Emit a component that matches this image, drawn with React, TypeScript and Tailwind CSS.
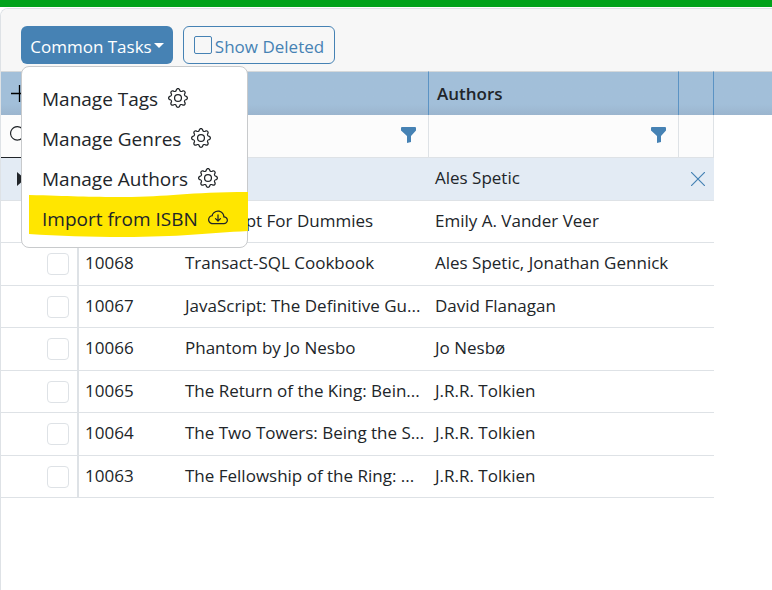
import { BsCloudArrowDown, BsGear, BsSearch } from "react-icons/bs";

type Book = { id: number; title: string; authors: string };

const books: Book[] = [
  { id: 10070, title: "SQL", authors: "Ales Spetic" },
  { id: 10069, title: "JavaScript For Dummies", authors: "Emily A. Vander Veer" },
  { id: 10068, title: "Transact-SQL Cookbook", authors: "Ales Spetic, Jonathan Gennick" },
  { id: 10067, title: "JavaScript: The Definitive Gu...", authors: "David Flanagan" },
  { id: 10066, title: "Phantom by Jo Nesbo", authors: "Jo Nesbø" },
  { id: 10065, title: "The Return of the King: Bein...", authors: "J.R.R. Tolkien" },
  { id: 10064, title: "The Two Towers: Being the S...", authors: "J.R.R. Tolkien" },
  { id: 10063, title: "The Fellowship of the Ring: ...", authors: "J.R.R. Tolkien" },
];

const menuItems = [
  { label: "Manage Tags", Icon: BsGear },
  { label: "Manage Genres", Icon: BsGear },
  { label: "Manage Authors", Icon: BsGear },
];

function Funnel() {
  return (
    <svg viewBox="0 0 16 17" className="h-[17px] w-4" fill="#4682b4" aria-hidden="true">
      <path d="M1 0h13a1 1 0 0 1 1 1v2.500L10 9v6l-4 1V9L0 3.500V1a1 1 0 0 1 1-1z" />
    </svg>
  );
}

function FilterCell({ label }: { label: string }) {
  return (
    <td className="border-r border-[#dee2e6] bg-[#fcfcfc] pr-[11px] pb-0.5">
      <div className="flex items-center justify-end">
        <button type="button" aria-label={label}>
          <Funnel />
        </button>
      </div>
    </td>
  );
}

function TasksMenu() {
  return (
    <ul className="absolute top-10 left-0 z-10 w-[227px] rounded-lg border border-[#c8cacc] bg-white pt-3 pb-2 text-[19px]">
      {menuItems.map(({ label, Icon }) => (
        <li key={label}>
          <button type="button" className="flex h-10 w-full items-center gap-2.5 pl-5 whitespace-nowrap">
            {label}
            <Icon className="mb-0.5 size-5" />
          </button>
        </li>
      ))}
      <li className="relative">
        <svg
          viewBox="0 0 220 48"
          preserveAspectRatio="none"
          className="absolute -top-2 left-[7px] h-12 w-[219px] max-w-none"
          fill="#ffe600"
          aria-hidden="true"
        >
          <path d="M0 4C40 5 60 6 95 6C140 6 160 1 220 1V40C180 42 150 46 95 46C60 46 30 45 0 43Z" />
        </svg>
        <button type="button" className="relative flex h-10 w-full items-center gap-2.5 pl-5 whitespace-nowrap">
          Import from ISBN
          <BsCloudArrowDown className="mb-0.5 size-5" />
        </button>
      </li>
    </ul>
  );
}

function Toolbar() {
  return (
    <div className="flex gap-2.5 bg-[#f7f7f7] pt-[17px] pb-[7px] pl-5 text-[17px]">
      <div className="relative">
        <button
          type="button"
          className="flex h-[38px] w-[152px] items-center justify-center gap-0.5 rounded-md bg-[#4682b4] pt-1 whitespace-nowrap text-white"
        >
          Common Tasks
          <svg viewBox="0 0 10 5" className="mb-1 h-[5px] w-2.5" fill="currentColor" aria-hidden="true">
            <path d="M0 0h10L5 5z" />
          </svg>
        </button>
        <TasksMenu />
      </div>
      <label className="flex h-[38px] w-[152px] items-center justify-center gap-[3px] rounded-md border border-[#4682b4] pt-1 whitespace-nowrap text-[#4682b4]">
        <input type="checkbox" className="mb-1 size-[18px] appearance-none rounded-xs border border-[#4682b4]" />
        Show Deleted
      </label>
    </div>
  );
}

export default function App() {
  return (
    <div className="flex min-h-screen flex-col overflow-hidden bg-white font-['Segoe_UI','Open_Sans',sans-serif] text-[#212529]">
      <div className="h-[7px] bg-[#00a21b]" />
      <main className="mt-px flex-1 overflow-hidden rounded-tl-lg border-t border-l border-[#dee2e6]">
        <Toolbar />
        <table className="w-full table-fixed border-separate border-spacing-0 text-[17px]">
          <colgroup>
            <col className="w-[78px]" />
            <col className="w-[100px]" />
            <col className="w-[250px]" />
            <col className="w-[250px]" />
            <col className="w-[35px]" />
            <col />
          </colgroup>
          <thead>
            <tr className="h-11 text-left">
              <th className="border-t border-[#d5d8da] bg-linear-to-t from-[#9bb5ce] to-[#a2bfd9] to-25% pl-2.5">
                <button type="button" aria-label="Add book" className="block">
                  <svg viewBox="0 0 18 18" className="size-[18px]" stroke="#000" fill="none" aria-hidden="true">
                    <path d="M0 8.500h18M8.500 0v17" strokeWidth="1.3" />
                  </svg>
                </button>
              </th>
              <th className="border-t border-[#d5d8da] bg-linear-to-t from-[#9bb5ce] to-[#a2bfd9] to-25%" />
              <th className="border-t border-r border-t-[#d5d8da] border-r-[#5b93c4] bg-linear-to-t from-[#9bb5ce] to-[#a2bfd9] to-25%" />
              <th className="border-t border-r border-t-[#d5d8da] border-r-[#5b93c4] bg-linear-to-t from-[#9bb5ce] to-[#a2bfd9] to-25% pl-2 font-semibold">
                Authors
              </th>
              <th className="border-t border-r border-t-[#d5d8da] border-r-[#5b93c4] bg-linear-to-t from-[#9bb5ce] to-[#a2bfd9] to-25%" />
              <th className="border-t border-[#d5d8da] bg-linear-to-t from-[#9bb5ce] to-[#a2bfd9] to-25%" />
            </tr>
          </thead>
          <tbody>
            <tr className="h-[43px] [&>td:not(:last-child)]:border-b">
              <td className="border-[#212529] bg-[#fcfcfc] pb-0.5 pl-[9px]">
                <BsSearch className="size-[18px]" />
              </td>
              <td className="border-[#dee2e6] bg-[#fcfcfc]" />
              <FilterCell label="Filter titles" />
              <FilterCell label="Filter authors" />
              <td className="border-r border-[#dee2e6] bg-[#fcfcfc]" />
              <td />
            </tr>
            {books.map((book, index) => (
              <tr
                key={book.id}
                className="odd:h-[42px] even:h-[43px] [&>td:not(:last-child)]:border-b [&>td:not(:last-child)]:border-[#dee2e6] [&:nth-child(2)>td:not(:last-child)]:bg-[#e3ebf4]"
              >
                <td className="border-r-2 pr-2">
                  <div className="flex items-center justify-end">
                    {index === 0 && (
                      <svg viewBox="0 0 8 14" className="mr-auto ml-4 h-3.5 w-2" fill="#212529" aria-hidden="true">
                        <path d="M0 0L8 7L0 14z" />
                      </svg>
                    )}
                    <input
                      type="checkbox"
                      aria-label={`Select ${book.id}`}
                      className="size-[22px] appearance-none rounded-sm border border-[#dee2e6]"
                    />
                  </div>
                </td>
                <td className="pb-0.5 pl-1.5">{book.id}</td>
                <td className="overflow-hidden pb-0.5 pl-1.5 whitespace-nowrap">{book.title}</td>
                <td className="overflow-hidden pb-0.5 pl-1.5 whitespace-nowrap">{book.authors}</td>
                <td className="pl-0.5">
                  {index === 0 && (
                    <button type="button" aria-label="Delete book" className="mx-auto block">
                      <svg viewBox="0 0 14 14" className="size-3.5" stroke="#4682b4" fill="none" aria-hidden="true">
                        <path d="M0 0L14 14M14 0L0 14" strokeWidth="1.2" />
                      </svg>
                    </button>
                  )}
                </td>
                <td />
              </tr>
            ))}
          </tbody>
        </table>
      </main>
    </div>
  );
}
